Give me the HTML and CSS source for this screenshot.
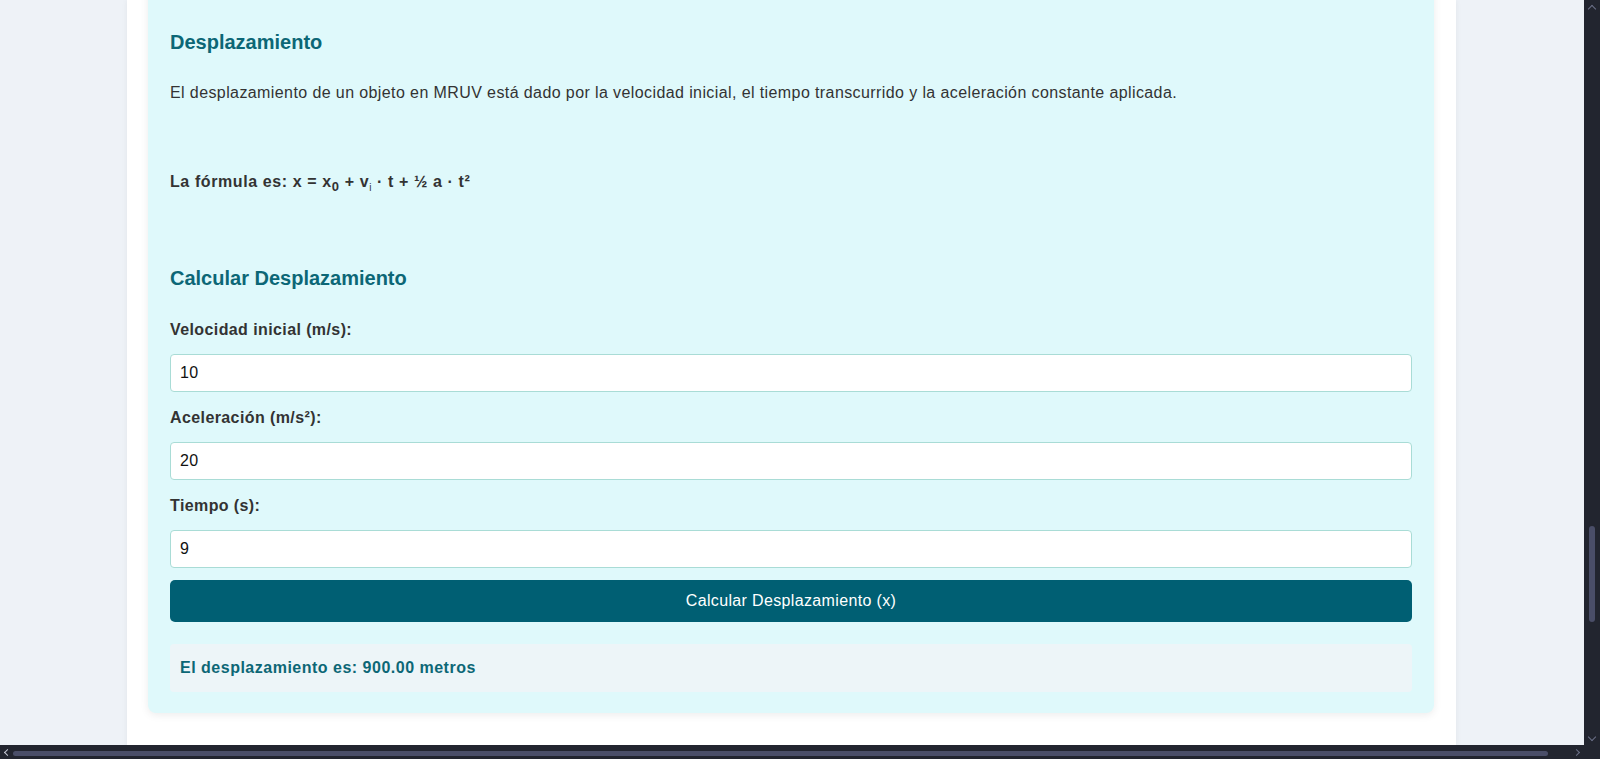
FILE: index.html
```html
<!DOCTYPE html>
<html lang="es">
<head>
<meta charset="utf-8">
<title>Desplazamiento MRUV</title>
<link rel="stylesheet" href="styles.css">
</head>
<body>
<main class="container">
  <section class="card">
    <h3 class="title">Desplazamiento</h3>
    <p class="desc">El desplazamiento de un objeto en MRUV está dado por la velocidad inicial, el tiempo transcurrido y la aceleración constante aplicada.</p>
    <p class="formula">La fórmula es: x = x<sub>0</sub> + v<sub class="si">i</sub> · t + ½ a · t²</p>
    <h3 class="title calc-title">Calcular Desplazamiento</h3>
    <form class="form">
      <label class="label">Velocidad inicial (m/s):</label>
      <input class="input" type="text" value="10">
      <label class="label">Aceleración (m/s²):</label>
      <input class="input" type="text" value="20">
      <label class="label">Tiempo (s):</label>
      <input class="input last" type="text" value="9">
      <button class="btn" type="button">Calcular Desplazamiento (x)</button>
    </form>
    <div class="result">El desplazamiento es: 900.00 metros</div>
  </section>
</main>
<div class="vscroll">
  <span class="arrow up"></span>
  <span class="vthumb"></span>
  <span class="arrow down"></span>
</div>
<div class="hscroll">
  <span class="harrow left"></span>
  <span class="hthumb"></span>
  <span class="harrow right"></span>
</div>
</body>
</html>
```

FILE: styles.css
```css
html, body {
  margin: 0;
  padding: 0;
  height: 759px;
  overflow: hidden;
}
body {
  background: #eef2f7;
  font-family: "Liberation Sans", Arial, sans-serif;
  color: #333;
  font-size: 16px;
}
.container {
  display: flow-root;
  box-sizing: border-box;
  width: 1329px;
  height: 759px;
  margin: 0 0 0 127px;
  background: #fff;
  padding: 0 22px 0 21px;
  box-shadow: 0 0 6px rgba(0,0,0,0.06);
}
.card {
  background: #dff9fb;
  border-radius: 8px;
  margin-top: -20px;
  padding: 20px 22px 21px 22px;
  box-shadow: 0 2px 8px rgba(0,0,0,0.08);
}
.title {
  margin: 0;
  font-size: 20px;
  font-weight: bold;
  color: #0c6776;
  line-height: 23px;
  padding-top: 31px;
}
.desc {
  margin: 29px 0 0;
  line-height: 20px;
  color: #333;
  letter-spacing: 0.4px;
}
.formula {
  margin: 68px 0 0;
  font-weight: bold;
  line-height: 22px;
  color: #333;
  letter-spacing: 0.6px;
}
.formula sub {
  font-size: 13px;
  vertical-align: -4px;
  line-height: 0;
}
.formula sub.si {
  font-size: 10px;
  font-weight: normal;
}
.calc-title {
  padding-top: 0;
  margin-top: 74px;
}
.form {
  display: flex;
  flex-direction: column;
  margin-top: 31px;
}
.label {
  font-weight: bold;
  line-height: 18px;
  margin-bottom: 15px;
  color: #333;
  letter-spacing: 0.4px;
}
.input {
  box-sizing: border-box;
  height: 38px;
  border: 1px solid #a9dcd6;
  border-radius: 4px;
  background: #fff;
  padding: 0 9px;
  font-family: "Liberation Sans", Arial, sans-serif;
  font-size: 16px;
  color: #111;
  margin-bottom: 17px;
  width: 100%;
  letter-spacing: 0.3px;
}
.input.last {
  margin-bottom: 12px;
}
.btn {
  height: 42px;
  border: 0;
  border-radius: 5px;
  background: #005f73;
  color: #fff;
  font-family: "Liberation Sans", Arial, sans-serif;
  font-size: 16px;
  width: 100%;
  letter-spacing: 0.35px;
}
.result {
  margin-top: 22px;
  background: #edf5f8;
  border-radius: 4px;
  height: 48px;
  box-sizing: border-box;
  padding: 0 10px;
  display: flex;
  align-items: center;
  font-weight: bold;
  color: #0c6776;
  letter-spacing: 0.5px;
}
.vscroll {
  position: fixed;
  top: 0;
  right: 0;
  width: 16px;
  height: 759px;
  background: #22252f;
}
.vthumb {
  position: absolute;
  left: 5px;
  top: 526px;
  width: 6px;
  height: 96px;
  border-radius: 3px;
  background: #4a4e68;
}
.arrow {
  position: absolute;
  left: 5px;
  width: 5px;
  height: 5px;
  border-left: 1.5px solid #6b7088;
  border-top: 1.5px solid #6b7088;
}
.arrow.up { top: 6px; transform: rotate(45deg); }
.arrow.down { top: 734px; transform: rotate(225deg); }
.hscroll {
  position: fixed;
  left: 0;
  bottom: 0;
  width: 1584px;
  height: 14px;
  background: #22252f;
}
.hthumb {
  position: absolute;
  left: 13px;
  top: 6px;
  width: 1535px;
  height: 5px;
  border-radius: 3px;
  background: #4a4e68;
}
.harrow {
  position: absolute;
  top: 5px;
  width: 4px;
  height: 4px;
  border-left: 1.5px solid #c5c8d4;
  border-top: 1.5px solid #c5c8d4;
}
.harrow.left { left: 5px; transform: rotate(-45deg); }
.harrow.right { left: 1574px; transform: rotate(135deg); border-color: #6b7088; }
```
